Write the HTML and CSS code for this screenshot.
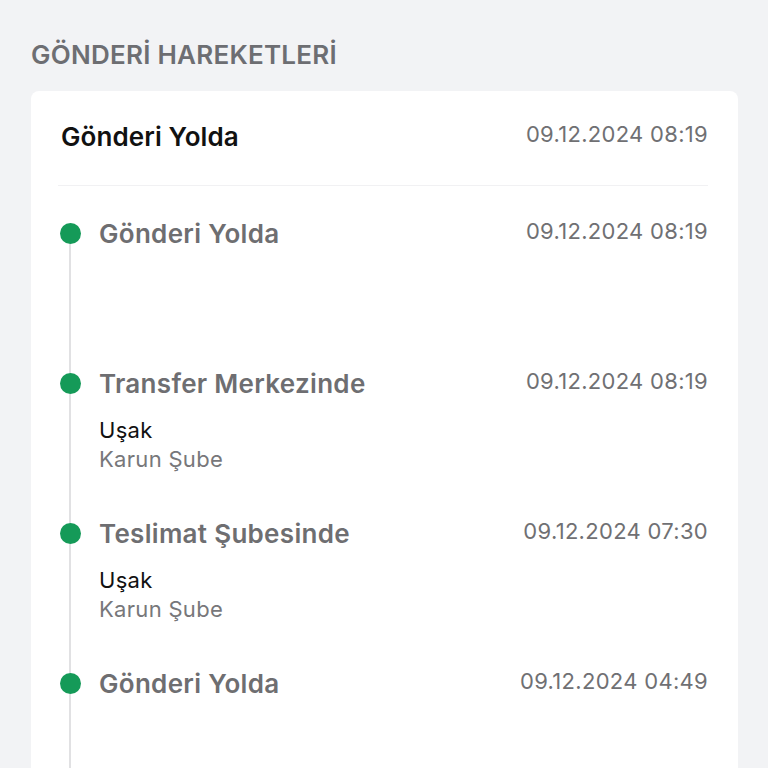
FILE: index.html
```html
<!DOCTYPE html>
<html lang="tr">
<head>
<meta charset="utf-8">
<link rel="stylesheet" href="styles.css">
</head>
<body>
<div class="page">
  <h2 class="section-title">GÖNDERİ HAREKETLERİ</h2>
  <div class="card">
    <div class="card-header">
      <div class="header-title">Gönderi Yolda</div>
      <div class="date">09.12.2024 08:19</div>
    </div>
    <div class="timeline">
      <div class="item">
        <div class="marker"><span class="dot"></span></div>
        <div class="content">
          <div class="title">Gönderi Yolda</div>
        </div>
        <div class="date">09.12.2024 08:19</div>
      </div>
      <div class="item">
        <div class="marker"><span class="dot"></span></div>
        <div class="content">
          <div class="title">Transfer Merkezinde</div>
          <div class="city">Uşak</div>
          <div class="branch">Karun Şube</div>
        </div>
        <div class="date">09.12.2024 08:19</div>
      </div>
      <div class="item">
        <div class="marker"><span class="dot"></span></div>
        <div class="content">
          <div class="title">Teslimat Şubesinde</div>
          <div class="city">Uşak</div>
          <div class="branch">Karun Şube</div>
        </div>
        <div class="date">09.12.2024 07:30</div>
      </div>
      <div class="item">
        <div class="marker"><span class="dot"></span></div>
        <div class="content">
          <div class="title">Gönderi Yolda</div>
        </div>
        <div class="date">09.12.2024 04:49</div>
      </div>
    </div>
  </div>
</div>
</body>
</html>
```
FILE: styles.css
```css
html, body {
  margin: 0;
  padding: 0;
  background: #f2f3f5;
  font-family: Inter, "Noto Sans", "Liberation Sans", sans-serif;
}
.page {
  padding: 40px 30px 0 31px;
}
.section-title {
  margin: 0;
  font-size: 26px;
  line-height: 30px;
  font-weight: 600;
  color: #6d6e72;
  letter-spacing: 0.25px;
}
.card {
  margin-top: 21px;
  background: #ffffff;
  border-radius: 8px;
  padding: 0 30px;
  min-height: 700px;
}
.card-header {
  display: flex;
  justify-content: space-between;
  align-items: flex-start;
  padding: 31px 0 33px;
  margin-left: -3px;
  padding-left: 3px;
  border-bottom: 1px solid #f1f1f3;
}
.header-title {
  font-size: 26px;
  line-height: 30px;
  font-weight: 600;
  color: #111111;
  letter-spacing: 0.1px;
}
.date {
  font-size: 22px;
  line-height: 24px;
  color: #707073;
  white-space: nowrap;
  letter-spacing: 0.3px;
}
.item {
  display: grid;
  grid-template-columns: 38px 1fr auto;
  min-height: 150px;
  box-sizing: border-box;
  padding-top: 33px;
}
.marker {
  position: relative;
}
.marker::before {
  content: "";
  position: absolute;
  left: 8px;
  top: 15px;
  bottom: -200px;
  width: 2px;
  background: #e1e1e3;
}
.dot {
  position: absolute;
  left: -1px;
  top: 4px;
  width: 21px;
  height: 21px;
  border-radius: 50%;
  background: #159a58;
}
.title {
  font-size: 26px;
  line-height: 30px;
  font-weight: 600;
  color: #6e6e71;
  letter-spacing: 0.3px;
}
.city {
  margin-top: 17px;
  font-size: 22px;
  line-height: 29px;
  color: #111111;
  letter-spacing: 0.3px;
}
.branch {
  font-size: 22px;
  line-height: 29px;
  color: #77777a;
  letter-spacing: 0.3px;
}
```
